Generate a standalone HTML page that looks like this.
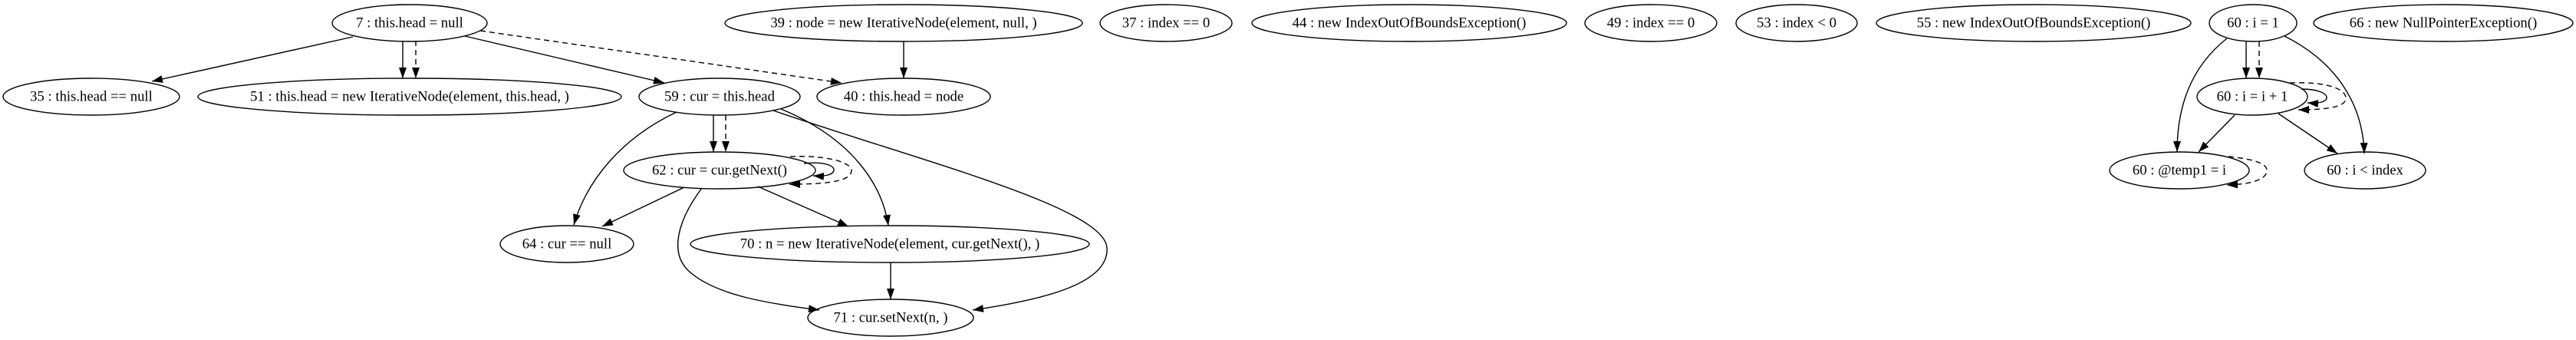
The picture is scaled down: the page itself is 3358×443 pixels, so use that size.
<!DOCTYPE html>
<html><head><meta charset="utf-8"><style>
html,body{margin:0;padding:0;background:#fff;}
svg{display:block;}
text{font-family:"Liberation Serif",serif;font-size:18.7px;fill:#000;text-anchor:middle;dominant-baseline:central;}
ellipse{fill:none;stroke:#000;stroke-width:1.4;}
path{fill:none;stroke:#000;stroke-width:1.4;}
.d{stroke-dasharray:7,5;}
</style></head><body>
<svg width="3358" height="443" viewBox="0 0 3358 443" xmlns="http://www.w3.org/2000/svg">
<defs>
<marker id="a" markerUnits="userSpaceOnUse" markerWidth="14" markerHeight="10" refX="14" refY="5" orient="auto"><path d="M0,0 L14,5 L0,10 z" style="fill:#000;stroke:none"/></marker>
</defs>
<g marker-end="url(#a)">
<path d="M460,48 L198,106" marker-end="url(#a)"/>
<path d="M525,53 L525,102" marker-end="url(#a)"/>
<path class="d" d="M542,53 L542,102" marker-end="url(#a)"/>
<path d="M606,47 L866,108" marker-end="url(#a)"/>
<path class="d" d="M626,40 L1097,108" marker-end="url(#a)"/>
<path d="M1178,54 L1178,102" marker-end="url(#a)"/>
<path d="M930,150 L930,198" marker-end="url(#a)"/>
<path class="d" d="M946,150 L946,198" marker-end="url(#a)"/>
<path d="M882,146 C810,180 765,235 748,293" marker-end="url(#a)"/>
<path d="M1018,142 C1110,180 1150,240 1158,294" marker-end="url(#a)"/>
<path d="M1008,144 C1200,210 1440,270 1443,323 C1446,372 1350,392 1268,404" marker-end="url(#a)"/>
<path d="M1048,213 C1075,210 1088,216 1087,222 C1086,228 1075,230 1060,229" marker-end="url(#a)"/>
<path class="d" d="M1030,204 C1080,202 1110,212 1110,222 C1110,236 1080,240 1029,240" marker-end="url(#a)"/>
<path d="M892,244 L785,295" marker-end="url(#a)"/>
<path d="M988,243 L1106,295" marker-end="url(#a)"/>
<path d="M915,245 C885,285 870,330 900,355 C935,385 1000,395 1068,404" marker-end="url(#a)"/>
<path d="M1161,342 L1161,390" marker-end="url(#a)"/>
<path d="M2928,54 L2928,102" marker-end="url(#a)"/>
<path class="d" d="M2945,54 L2945,102" marker-end="url(#a)"/>
<path d="M2903,50 C2855,88 2838,140 2838,198" marker-end="url(#a)"/>
<path d="M2978,47 C3040,78 3080,130 3082,200" marker-end="url(#a)"/>
<path d="M2913,150 L2866,198" marker-end="url(#a)"/>
<path d="M2970,148 L3047,200" marker-end="url(#a)"/>
<path d="M3000,116 C3022,116 3033,122 3033,127 C3033,133 3022,135 3008,134" marker-end="url(#a)"/>
<path class="d" d="M2985,108 C3040,106 3058,118 3058,128 C3058,140 3030,143 2996,143" marker-end="url(#a)"/>
<path class="d" d="M2905,204 C2945,208 2955,215 2955,222 C2955,234 2935,240 2903,241" marker-end="url(#a)"/>
</g>
<ellipse cx="534" cy="30" rx="101" ry="24"/><text x="534" y="30">7 : this.head = null</text>
<ellipse cx="119" cy="126" rx="115" ry="24"/><text x="119" y="126">35 : this.head == null</text>
<ellipse cx="534" cy="126" rx="276" ry="24"/><text x="534" y="126">51 : this.head = new IterativeNode(element, this.head, )</text>
<ellipse cx="938" cy="126" rx="105" ry="24"/><text x="938" y="126">59 : cur = this.head</text>
<ellipse cx="1178" cy="126" rx="113" ry="24"/><text x="1178" y="126">40 : this.head = node</text>
<ellipse cx="1178" cy="30" rx="233" ry="24"/><text x="1178" y="30">39 : node = new IterativeNode(element, null, )</text>
<ellipse cx="1520" cy="30" rx="86" ry="24"/><text x="1520" y="30">37 : index == 0</text>
<ellipse cx="1837" cy="30" rx="205" ry="24"/><text x="1837" y="30">44 : new IndexOutOfBoundsException()</text>
<ellipse cx="2152" cy="30" rx="86" ry="24"/><text x="2152" y="30">49 : index == 0</text>
<ellipse cx="2342" cy="30" rx="79" ry="24"/><text x="2342" y="30">53 : index &lt; 0</text>
<ellipse cx="2651" cy="30" rx="205" ry="24"/><text x="2651" y="30">55 : new IndexOutOfBoundsException()</text>
<ellipse cx="2937" cy="30" rx="57" ry="24"/><text x="2937" y="30">60 : i = 1</text>
<ellipse cx="3185" cy="30" rx="169" ry="24"/><text x="3185" y="30">66 : new NullPointerException()</text>
<ellipse cx="938" cy="222" rx="125" ry="24"/><text x="938" y="222">62 : cur = cur.getNext()</text>
<ellipse cx="739" cy="318" rx="87" ry="24"/><text x="739" y="318">64 : cur == null</text>
<ellipse cx="1160" cy="318" rx="260" ry="24"/><text x="1160" y="318">70 : n = new IterativeNode(element, cur.getNext(), )</text>
<ellipse cx="1161" cy="414" rx="108" ry="24"/><text x="1161" y="414">71 : cur.setNext(n, )</text>
<ellipse cx="2936" cy="126" rx="72" ry="24"/><text x="2936" y="126">60 : i = i + 1</text>
<ellipse cx="2841" cy="222" rx="91" ry="24"/><text x="2841" y="222">60 : @temp1 = i</text>
<ellipse cx="3083" cy="222" rx="79" ry="24"/><text x="3083" y="222">60 : i &lt; index</text>
</svg>
</body></html>
